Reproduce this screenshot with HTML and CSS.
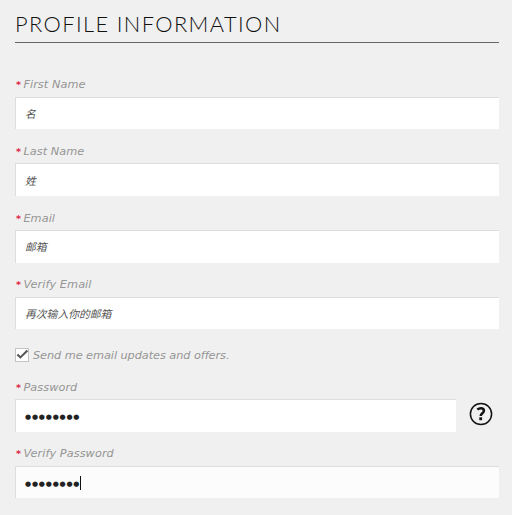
FILE: index.html
```html
<!DOCTYPE html>
<html lang="en">
<head>
    <meta charset="UTF-8">
    <meta name="viewport" content="width=device-width, initial-scale=1.0">
    <title>Profile Information</title>
    <link rel="stylesheet" href="styles.css">
</head>
<body>
    <div class="container">
        <h1>PROFILE INFORMATION</h1>
        <form id="profileForm">
            <div class="form-group">
                <label for="firstName"><b>*</b><span>First Name</span></label>
                <input type="text" id="firstName" name="firstName" placeholder="名">
            </div>
            <div class="form-group">
                <label for="lastName"><b>*</b><span>Last Name</span></label>
                <input type="text" id="lastName" name="lastName" placeholder="姓">
            </div>
            <div class="form-group">
                <label for="email"><b>*</b><span>Email</span></label>
                <input type="email" id="email" name="email" placeholder="邮箱">
            </div>
            <div class="form-group">
                <label for="verifyEmail"><b>*</b><span>Verify Email</span></label>
                <input type="email" id="verifyEmail" name="verifyEmail" placeholder="再次输入你的邮箱">
            </div>
            <label class="check-row">
                <svg class="checkbox" viewBox="0 0 14 14">
                    <rect x="0.5" y="0.5" width="13" height="13" fill="#fff" stroke="#c4c4c4"/>
                    <path d="M2.4 6.4L5.4 9.4L12.4 2.6" fill="none" stroke="#555" stroke-width="2.1"/>
                </svg>
                <span>Send me email updates and offers.</span>
            </label>
            <div class="form-group">
                <label for="password"><b>*</b><span>Password</span></label>
                <div class="password-row">
                    <div class="input" id="password"><span class="dots">●●●●●●●●</span></div>
                    <svg class="help" viewBox="0 0 24 24">
                        <circle cx="12" cy="12" r="10.6" fill="none" stroke="#111" stroke-width="1.5"/>
                        <path d="M8.3 7.6C9.5 6.7 10.6 6.3 11.8 6.3C13.8 6.3 14.9 7.3 14.9 8.8C14.9 11.2 11.7 11.2 11.7 14" fill="none" stroke="#111" stroke-width="2.5"/>
                        <rect x="10.3" y="15.3" width="2.8" height="2.9" fill="#111"/>
                    </svg>
                </div>
            </div>
            <div class="form-group">
                <label for="verifyPassword"><b>*</b><span>Verify Password</span></label>
                <div class="input focused" id="verifyPassword"><span class="dots">●●●●●●●●</span><i class="caret"></i></div>
            </div>
        </form>
    </div>
</body>
</html>
```
FILE: styles.css
```css
* {
    margin: 0;
    padding: 0;
    box-sizing: border-box;
}
body {
    background-color: #f0f0f0;
    font-family: "DejaVu Sans", "Noto Sans CJK SC", sans-serif;
}
.container {
    padding: 0 13px 0 15px;
}
h1 {
    height: 43px;
    padding-top: 11px;
    border-bottom: 1px solid #666;
    margin-bottom: 33px;
    color: #111;
    font-family: Lato, sans-serif;
    font-size: 21.8px;
    font-weight: 300;
    line-height: 25px;
    letter-spacing: 1.4px;
    white-space: nowrap;
}
.form-group {
    height: 66.8px;
}
label {
    display: flex;
    height: 20.6px;
    line-height: 18.4px;
    color: #959595;
    font-size: 11.3px;
    font-style: italic;
    letter-spacing: 0.06px;
    white-space: nowrap;
}
label b {
    width: 8.4px;
    padding-left: 1px;
    color: #e0243f;
    font-size: 9.5px;
    line-height: 18px;
}
input, .input {
    display: flex;
    align-items: center;
    width: 100%;
    height: 32.4px;
    padding: 0 9px;
    border: 0 solid #ddd;
    border-width: 1px 0 0 1px;
    background-color: #fff;
    color: #222;
    outline: none;
}
input::placeholder {
    color: #555;
    font-family: "Noto Sans CJK SC", sans-serif;
    font-size: 10.8px;
    font-style: italic;
    opacity: 1;
}
.check-row {
    height: 35.4px;
    padding-top: 4px;
    line-height: 18px;
    letter-spacing: -0.06px;
}
.checkbox {
    width: 14px;
    height: 14px;
    margin: 1px 4px 0 0;
}
.password-row {
    display: flex;
}
.password-row .input {
    width: 441px;
}
.help {
    width: 24px;
    height: 24px;
    margin: 3px 0 0 13px;
}
.dots {
    padding-top: 2px;
    font-family: "DejaVu Sans", sans-serif;
    font-size: 7px;
    line-height: 10px;
    letter-spacing: 0.8px;
}
.focused {
    background-color: #fcfcfc;
}
.caret {
    width: 1px;
    height: 14px;
    background-color: #111;
}
```
